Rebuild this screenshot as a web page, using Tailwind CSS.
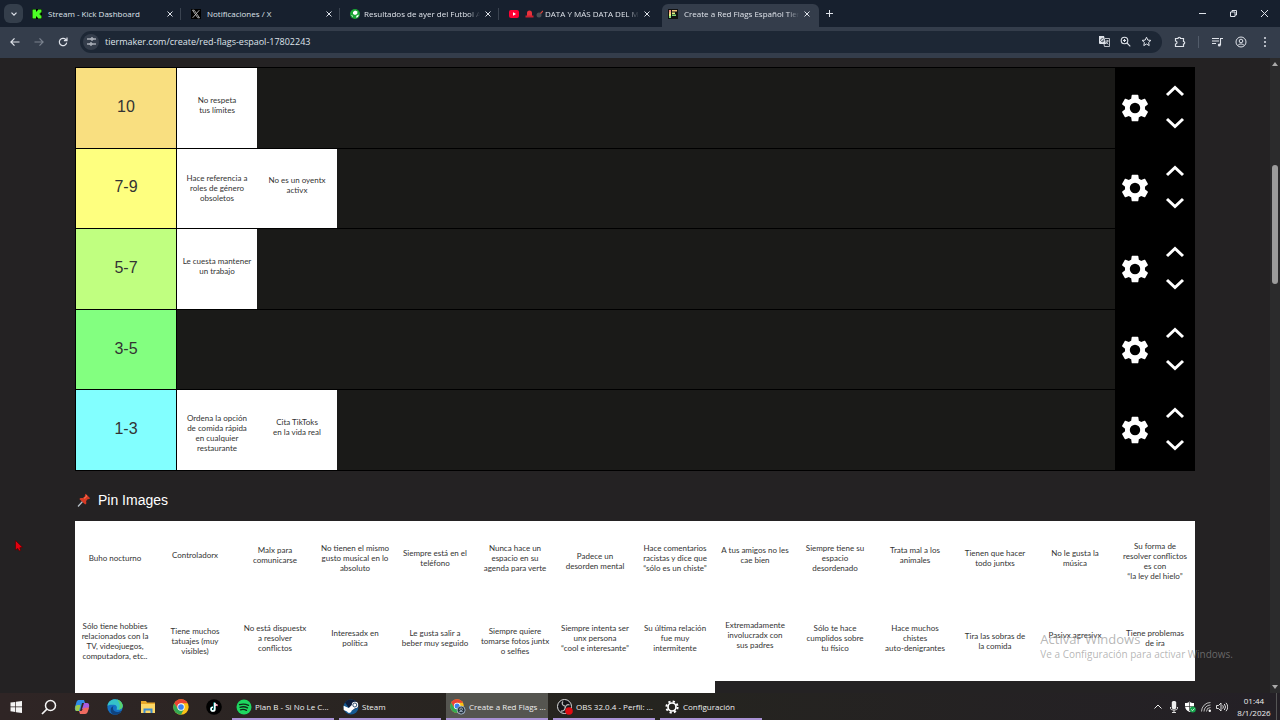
<!DOCTYPE html>
<html lang="es">
<head>
<meta charset="utf-8">
<meta name="viewport" content="width=device-width, initial-scale=1">
<title>Create a Red Flags Español Tier List</title>
<script src="https://cdn.jsdelivr.net/npm/@tailwindcss/browser@4"></script>
</head>
<body class="flex h-screen flex-col overflow-hidden bg-[#242223] font-['Open_Sans','Noto_Sans',sans-serif] text-[#dfe3ea]">
<svg class="hidden">
  <symbol id="gear" viewBox="0 0 24 24"><path fill="currentColor" d="M19.43 12.98c.04-.32.07-.64.07-.98s-.03-.66-.07-.98l2.11-1.65c.19-.15.24-.42.12-.64l-2-3.46c-.12-.22-.39-.3-.61-.22l-2.49 1c-.52-.4-1.08-.73-1.69-.98l-.38-2.65A.49.49 0 0 0 14 2h-4c-.25 0-.46.18-.49.42l-.38 2.65c-.61.25-1.17.59-1.69.98l-2.49-1c-.23-.09-.49 0-.61.22l-2 3.46c-.13.22-.07.49.12.64l2.11 1.65c-.04.32-.07.65-.07.98s.03.66.07.98l-2.11 1.65c-.19.15-.24.42-.12.64l2 3.46c.12.22.39.3.61.22l2.49-1c.52.4 1.08.73 1.69.98l.38 2.65c.03.24.24.42.49.42h4c.25 0 .46-.18.49-.42l.38-2.65c.61-.25 1.17-.59 1.69-.98l2.49 1c.23.09.49 0 .61-.22l2-3.46c.12-.22.07-.49-.12-.64l-2.11-1.65zM12 15.9a3.9 3.9 0 1 1 0-7.8 3.9 3.9 0 0 1 0 7.8z"/></symbol>
  <symbol id="up" viewBox="0 0 20 12"><path d="M2 10 10 2.500 18 10" fill="none" stroke="currentColor" stroke-width="3"/></symbol>
  <symbol id="down" viewBox="0 0 20 12"><path d="M2 2 10 9.500 18 2" fill="none" stroke="currentColor" stroke-width="3"/></symbol>
  <symbol id="x" viewBox="0 0 8 8"><path d="M1.500 1.500 6.500 6.500M6.500 1.500 1.500 6.500" fill="none" stroke="currentColor" stroke-width="1"/></symbol>
  <symbol id="chrome" viewBox="0 0 48 48"><circle cx="24" cy="24" r="23" fill="#fbc116"/><path d="M24 13h20a23 23 0 0 0-40-.5L14.500 30z" fill="#ea4335"/><path d="M4 12.500A23 23 0 0 0 24 47l9.500-17.500-19 0z" fill="#34a853"/><circle cx="24" cy="24" r="11" fill="#fff"/><circle cx="24" cy="24" r="8.500" fill="#3b82f0"/></symbol>
</svg>

<!-- Tab strip -->
<header class="flex h-[27px] shrink-0 items-end bg-[#17202e] text-[8px]">
  <button aria-label="Buscar pestañas" class="mb-1 ml-1 flex size-[19px] shrink-0 items-center justify-center rounded-md bg-[#343e4b]"><svg class="size-2" viewBox="0 0 8 8"><path d="M1.500 2.700 4 5.200 6.500 2.700" fill="none" stroke="currentColor" stroke-width="1.200"/></svg></button>
  <nav class="ml-[3px] flex min-w-0">
    <div class="flex h-[23px] w-[159px] items-center gap-1.5 pb-1 pl-1.5 pr-1">
      <svg class="size-2.5 shrink-0" viewBox="0 0 10 10"><path fill="#000" d="M0 0h10v10H0z"/><path fill="#4cff26" d="M.5 .5h3.500v2H5v-1h1v-1h3.500v3h-1v1h-1v1h1v1h1v3H6v-1H5v-1H4v2H.5z"/></svg>
      <a href="#" class="min-w-0 flex-1 whitespace-nowrap">Stream - Kick Dashboard</a>
      <button aria-label="Cerrar"><svg class="size-2"><use href="#x"/></svg></button>
      <span class="h-3 w-px bg-[#3a4350]"></span>
    </div>
    <div class="flex h-[23px] w-[159px] items-center gap-1.5 pb-1 pl-1.5 pr-1">
      <svg class="size-2.5 shrink-0" viewBox="0 0 10 10"><path fill="#000" d="M0 0h10v10H0z"/><path d="M1.500 1.200h1.700l5.300 7.600H6.800zM8.300 1.200 1.700 8.800" fill="none" stroke="#bbb" stroke-width=".9"/></svg>
      <a href="#" class="min-w-0 flex-1 whitespace-nowrap">Notificaciones / X</a>
      <button aria-label="Cerrar"><svg class="size-2"><use href="#x"/></svg></button>
      <span class="h-3 w-px bg-[#3a4350]"></span>
    </div>
    <div class="flex h-[23px] w-[159px] items-center gap-1 pb-1 pl-1.5 pr-1">
      <svg class="size-2.5 shrink-0" viewBox="0 0 10 10"><circle cx="5" cy="5" r="5" fill="#19a534"/><path fill="#fff" d="m3 3 2-1.500 2.500 1-.3 2.500L5 6 3 5zM1 6l1.500.5.500 2zM8 6l1-.5-1 2.500-2 .8.500-2z"/></svg>
      <a href="#" class="min-w-0 flex-1 whitespace-nowrap mask-r-from-90%">Resultados de ayer del Futbol A</a>
      <button aria-label="Cerrar" class="mr-0.5"><svg class="size-2"><use href="#x"/></svg></button>
      <span class="h-3 w-px bg-[#3a4350]"></span>
    </div>
    <div class="flex h-[23px] w-[159px] items-center gap-1 pb-1 pl-1.5 pr-[11px]">
      <svg class="mr-0.5 size-2.5 shrink-0" viewBox="0 0 10 10"><rect y="1" width="10" height="8" rx="2" fill="#f03"/><path fill="#fff" d="m4 3.200 3 1.800-3 1.800z"/></svg>
      <a href="#" class="flex min-w-0 flex-1 items-center gap-0.5 whitespace-nowrap mask-r-from-90%">
        <svg class="h-2 w-[9px] shrink-0" viewBox="0 0 9 8"><path fill="#e8323c" d="M2 6V3a2.500 2.500 0 0 1 5 0v3z"/><path fill="#cc2130" d="M.5 5.500h8V7.500h-8z"/></svg>
        <svg class="h-2 w-[7px] shrink-0" viewBox="1 0 7 8"><circle cx="4" cy="5" r="2.500" fill="#4a4f55"/><path d="M5.500 3.500 8 1" stroke="#d5463c" stroke-width="1.200"/></svg>
        <span>DATA Y MÁS DATA DEL M</span></a>
      <button aria-label="Cerrar"><svg class="size-2"><use href="#x"/></svg></button>
    </div>
    <div class="flex h-[23px] w-[157px] items-center gap-1 rounded-t-md bg-[#343d4b] pb-1 pl-1.5 pr-2">
      <svg class="mr-0.5 size-2.5 shrink-0" viewBox="0 0 10 10"><path fill="#111" d="M0 0h10v10H0z"/><path fill="#f08a80" d="M1 1h2v2H1z"/><path fill="#f2c27c" d="M1 3h2v2H1zM4 1h5v1.500H4z"/><path fill="#eaf07c" d="M1 5h2v2H1zM4 3.500h3V5H4z"/><path fill="#83d978" d="M1 7h2v2H1zM4 5.500h4V7H4z"/></svg>
      <a href="#" class="min-w-0 flex-1 whitespace-nowrap mask-r-from-90%">Create a Red Flags Español Tier</a>
      <button aria-label="Cerrar"><svg class="size-2"><use href="#x"/></svg></button>
    </div>
  </nav>
  <button aria-label="Nueva pestaña" class="mb-[9px] ml-1.5"><svg class="size-[9px]" viewBox="0 0 9 9"><path d="M4.500 1v7M1 4.500h7" stroke="currentColor"/></svg></button>
  <div class="mb-[9px] ml-auto mr-[11px] flex gap-[22px]">
    <button aria-label="Minimizar"><svg class="size-[9px]" viewBox="0 0 9 9"><path d="M1 4.500h7" stroke="currentColor"/></svg></button>
    <button aria-label="Restaurar"><svg class="size-[9px]" viewBox="0 0 9 9"><path d="M1.500 3h4.500v4.500H1.500zM3 3V1.500h4.500V6H6" fill="none" stroke="currentColor"/></svg></button>
    <button aria-label="Cerrar ventana"><svg class="size-[9px]" viewBox="0 0 9 9"><path d="m1 1 7 7M8 1 1 8" stroke="currentColor"/></svg></button>
  </div>
</header>

<!-- Address bar -->
<div class="flex h-[31px] shrink-0 items-center bg-[#343d4b] pb-0.5 pr-[9px]">
  <div class="flex w-20 shrink-0 items-center gap-3 pl-[9px]">
    <button aria-label="Atrás"><svg class="size-3" viewBox="0 0 12 12"><path d="M10.500 6H2M5.500 2.300 1.900 6l3.600 3.700" fill="none" stroke="currentColor" stroke-width="1.200"/></svg></button>
    <button aria-label="Adelante" class="text-[#7a828e]"><svg class="size-3" viewBox="0 0 12 12"><path d="M1.500 6H10M6.500 2.300 10.100 6 6.500 9.700" fill="none" stroke="currentColor" stroke-width="1.200"/></svg></button>
    <button aria-label="Recargar"><svg class="size-3" viewBox="0 0 12 12"><path d="M9.700 6.600A3.700 3.700 0 1 1 8.800 3.500L10 4.700M10 1.600v3.100H6.900" fill="none" stroke="currentColor" stroke-width="1.200"/></svg></button>
  </div>
  <form class="flex h-[22px] min-w-0 flex-1 items-center rounded-full bg-[#1d2735] pl-[3px] pr-2.5">
    <button type="button" aria-label="Información del sitio" class="flex size-4 items-center justify-center rounded-full bg-[#343d4b]"><svg class="size-[9px]" viewBox="0 0 9 9"><path d="M0 2h3.500M5.500 7H9M6.500 2H9M0 7h2.500" stroke="currentColor"/><circle cx="5" cy="2" r="1.200" fill="none" stroke="currentColor"/><circle cx="4" cy="7" r="1.200" fill="none" stroke="currentColor"/></svg></button>
    <input aria-label="Dirección" value="tiermaker.com/create/red-flags-espaol-17802243" class="ml-1.5 min-w-0 flex-1 bg-transparent text-[9px] outline-none">
    <div class="flex items-center gap-2.5">
      <button type="button" aria-label="Traducir"><svg class="size-[11px]" viewBox="0 0 11 11"><path fill="currentColor" d="M0 0h5l2 8H1a1 1 0 0 1-1-1z"/><path d="M6 2.500h4.500v8H5.500L5 8M6.500 5H10M8.300 4v1c0 1.500-1 2.500-1.500 3M7.300 6l2 2.500" fill="none" stroke="currentColor" stroke-width=".8"/><path d="M4.700 3.300A1.600 1.600 0 1 0 4.900 4.600H3.500" fill="none" stroke="#1d2735" stroke-width=".8"/></svg></button>
      <button type="button" aria-label="Zoom"><svg class="size-[11px]" viewBox="0 0 11 11"><circle cx="4.500" cy="4.500" r="3.300" fill="none" stroke="currentColor" stroke-width="1.100"/><path d="m7 7 3.300 3.300M3 4.500h3M4.500 3v3" stroke="currentColor" stroke-width="1.100"/></svg></button>
      <button type="button" aria-label="Favorito"><svg class="size-[11px]" viewBox="0 0 11 11"><path d="m5.500 1.200 1.300 2.900 3.100.3-2.300 2.100.6 3.100-2.700-1.600-2.700 1.600.6-3.100L1.100 4.400l3.100-.3z" fill="none" stroke="currentColor"/></svg></button>
    </div>
  </form>
  <div class="ml-3 flex items-center gap-3">
    <button aria-label="Extensiones"><svg class="size-3" viewBox="0 0 12 12"><path d="M1.500 2.500H4a1.200 1.200 0 0 1 2.500 0h3v3a1.200 1.200 0 0 1 0 2.500v2.500h-8V8a1.500 1.500 0 0 0 0-3z" fill="none" stroke="currentColor" stroke-width="1.200"/></svg></button>
    <span class="h-3 w-px bg-[#525c6a]"></span>
    <button aria-label="Multimedia"><svg class="size-3" viewBox="0 0 12 12"><path d="M1 2.500h7M1 5h7M1 7.500h4M9.500 9V2.500H12" fill="none" stroke="currentColor" stroke-width="1.100"/><circle cx="8.300" cy="9" r="1.500" fill="currentColor"/></svg></button>
    <button aria-label="Perfil"><svg class="size-3" viewBox="0 0 12 12"><circle cx="6" cy="6" r="5" fill="none" stroke="currentColor"/><circle cx="6" cy="5" r="1.800" fill="none" stroke="currentColor"/><path d="M2.700 9.500c1.500-2 5-2 6.600 0" fill="none" stroke="currentColor"/></svg></button>
    <button aria-label="Menú"><svg class="size-3" viewBox="0 0 12 12" fill="currentColor"><circle cx="6" cy="2" r="1"/><circle cx="6" cy="6" r="1"/><circle cx="6" cy="10" r="1"/></svg></button>
  </div>
</div>

<!-- Page -->
<div class="relative flex min-h-0 flex-1">
  <main class="min-w-0 flex-1 overflow-hidden px-[75px] pt-[9px]">
    <section class="flex h-[404px] flex-col border border-r-0 border-black bg-[#1a1a18] text-center font-['Lato',sans-serif] text-[8px]/[10px] text-[#333]">
      <div class="flex flex-1 border-b border-black">
        <h2 class="flex w-[101px] items-center justify-center border-r border-black bg-[#f9df80] pb-0.5 font-['Liberation_Sans',sans-serif] text-base">10</h2>
        <div class="flex flex-1"><p class="flex w-20 items-center justify-center bg-white pb-1.5">No respeta<br>tus límites</p></div>
        <div class="flex w-20 bg-black text-white"><button aria-label="Ajustes" class="flex w-10 items-center justify-center"><svg class="size-8"><use href="#gear"/></svg></button><div class="flex w-10 flex-col items-center justify-center gap-5 pb-0.5"><button aria-label="Subir"><svg class="h-3 w-5"><use href="#up"/></svg></button><button aria-label="Bajar"><svg class="h-3 w-5"><use href="#down"/></svg></button></div></div>
      </div>
      <div class="flex flex-1 border-b border-black">
        <h2 class="flex w-[101px] items-center justify-center border-r border-black bg-[#feff7f] pb-0.5 font-['Liberation_Sans',sans-serif] text-base">7-9</h2>
        <div class="flex flex-1"><p class="flex w-20 items-center justify-center bg-white">Hace referencia a<br>roles de género<br>obsoletos</p><p class="flex w-20 items-center justify-center bg-white pb-1.5">No es un oyentx<br>activx</p></div>
        <div class="flex w-20 bg-black text-white"><button aria-label="Ajustes" class="flex w-10 items-center justify-center"><svg class="size-8"><use href="#gear"/></svg></button><div class="flex w-10 flex-col items-center justify-center gap-5 pb-0.5"><button aria-label="Subir"><svg class="h-3 w-5"><use href="#up"/></svg></button><button aria-label="Bajar"><svg class="h-3 w-5"><use href="#down"/></svg></button></div></div>
      </div>
      <div class="flex flex-1 border-b border-black">
        <h2 class="flex w-[101px] items-center justify-center border-r border-black bg-[#c0ff80] pb-0.5 font-['Liberation_Sans',sans-serif] text-base">5-7</h2>
        <div class="flex flex-1"><p class="flex w-20 items-center justify-center bg-white pb-1.5">Le cuesta mantener<br>un trabajo</p></div>
        <div class="flex w-20 bg-black text-white"><button aria-label="Ajustes" class="flex w-10 items-center justify-center"><svg class="size-8"><use href="#gear"/></svg></button><div class="flex w-10 flex-col items-center justify-center gap-5 pb-0.5"><button aria-label="Subir"><svg class="h-3 w-5"><use href="#up"/></svg></button><button aria-label="Bajar"><svg class="h-3 w-5"><use href="#down"/></svg></button></div></div>
      </div>
      <div class="flex flex-1 border-b border-black">
        <h2 class="flex w-[101px] items-center justify-center border-r border-black bg-[#83ff80] pb-0.5 font-['Liberation_Sans',sans-serif] text-base">3-5</h2>
        <div class="flex flex-1"></div>
        <div class="flex w-20 bg-black text-white"><button aria-label="Ajustes" class="flex w-10 items-center justify-center"><svg class="size-8"><use href="#gear"/></svg></button><div class="flex w-10 flex-col items-center justify-center gap-5 pb-0.5"><button aria-label="Subir"><svg class="h-3 w-5"><use href="#up"/></svg></button><button aria-label="Bajar"><svg class="h-3 w-5"><use href="#down"/></svg></button></div></div>
      </div>
      <div class="flex flex-1">
        <h2 class="flex w-[101px] items-center justify-center border-r border-black bg-[#82ffff] pb-0.5 font-['Liberation_Sans',sans-serif] text-base">1-3</h2>
        <div class="flex flex-1"><p class="flex w-20 items-center justify-center bg-white pt-1.5">Ordena la opción<br>de comida rápida<br>en cualquier<br>restaurante</p><p class="flex w-20 items-center justify-center bg-white pb-1.5">Cita TikToks<br>en la vida real</p></div>
        <div class="flex w-20 bg-black text-white"><button aria-label="Ajustes" class="flex w-10 items-center justify-center"><svg class="size-8"><use href="#gear"/></svg></button><div class="flex w-10 flex-col items-center justify-center gap-5 pb-0.5"><button aria-label="Subir"><svg class="h-3 w-5"><use href="#up"/></svg></button><button aria-label="Bajar"><svg class="h-3 w-5"><use href="#down"/></svg></button></div></div>
      </div>
    </section>

    <h3 class="mb-[11px] mt-[19px] flex h-5 items-center gap-[7px] pl-0.5 font-['Liberation_Sans',sans-serif] text-sm text-white">
      <svg class="size-3.5" viewBox="0 0 14 14"><path d="M1 13.500 6 8" stroke="#b9c2ca" stroke-width="1.200"/><path fill="#d63a24" d="m8.500.8 4.700 4.400-1.500 1.100-.8-.2-1.800 2 .3 2.300-1.200 1.200L2.300 6.100l1.200-1.200 2.400.2L8 3.200l-.2-1z"/><path fill="#f36a4b" d="m9 1.500 1.500 1.400-2.800 3-1-.9L9 3z"/></svg>
      Pin Images</h3>

    <section class="grid grid-cols-14 auto-rows-[80px] text-center font-['Lato',sans-serif] text-[8px]/[10px] text-[#333] *:flex *:items-center *:justify-center *:bg-white *:whitespace-nowrap">
      <p class="pb-1.5">Buho nocturno</p>
      <p class="pb-3">Controladorx</p>
      <p class="pb-3">Malx para<br>comunicarse</p>
      <p class="pb-1.5">No tienen el mismo<br>gusto musical en lo<br>absoluto</p>
      <p class="pb-1.5">Siempre está en el<br>teléfono</p>
      <p class="pb-1.5">Nunca hace un<br>espacio en su<br>agenda para verte</p>
      <p>Padece un<br>desorden mental</p>
      <p class="pb-1.5">Hace comentarios<br>racistas y dice que<br>“sólo es un chiste”</p>
      <p class="pb-3">A tus amigos no les<br>cae bien</p>
      <p class="pb-1.5">Siempre tiene su<br>espacio<br>desordenado</p>
      <p class="pb-3">Trata mal a los<br>animales</p>
      <p class="pb-1.5">Tienen que hacer<br>todo juntxs</p>
      <p class="pb-1.5">No le gusta la<br>música</p>
      <p>Su forma de<br>resolver conflictos<br>es con<br>“la ley del hielo”</p>
      <p>Sólo tiene hobbies<br>relacionados con la<br>TV, videojuegos,<br>computadora, etc..</p>
      <p>Tiene muchos<br>tatuajes (muy<br>visibles)</p>
      <p class="pb-1.5">No está dispuestx<br>a resolver<br>conflictos</p>
      <p class="pb-1.5">Interesadx en<br>política</p>
      <p class="pb-1.5">Le gusta salir a<br>beber muy seguido</p>
      <p>Siempre quiere<br>tomarse fotos juntx<br>o selfies</p>
      <p class="pb-1.5">Siempre intenta ser<br>unx persona<br>“cool e interesante”</p>
      <p class="pb-1.5">Su última relación<br>fue muy<br>intermitente</p>
      <p class="pb-3">Extremadamente<br>involucradx con<br>sus padres</p>
      <p class="pb-1.5">Sólo te hace<br>cumplidos sobre<br>tu físico</p>
      <p class="pb-1.5">Hace muchos<br>chistes<br>auto-denigrantes</p>
      <p>Tira las sobras de<br>la comida</p>
      <p class="pb-3">Pasivx agresivx</p>
      <p class="pb-1.5">Tiene problemas<br>de ira</p>
      <div class="col-span-8"></div>
    </section>
  </main>

  <div class="flex w-2.5 shrink-0 flex-col items-center justify-between bg-[#2b2b2c] py-1">
    <svg class="h-1 w-1.5" viewBox="0 0 6 4"><path fill="#aaa" d="m3 0 3 4H0z"/></svg>
    <div class="flex w-1.5 flex-1 flex-col pt-[99px]"><div class="h-[119px] rounded-full bg-[#9c9c9c]"></div></div>
    <svg class="h-1 w-1.5" viewBox="0 0 6 4"><path fill="#aaa" d="m3 4 3-4H0z"/></svg>
  </div>

  <!-- Mouse pointer -->
  <svg class="absolute left-[15px] top-[482px] h-3 w-2" viewBox="0 0 8 12"><path fill="#e3000f" stroke="#500" stroke-width=".7" d="M.5.500v9.500l2.200-1.600L4.200 11l1.600-.8-1-2.400 2.700-.5z"/></svg>

  <!-- System activation notice -->
  <div class="pointer-events-none absolute bottom-8 right-[47px] text-[#8e8e8e]/65">
    <p class="text-[13px]/[16px]">Activar Windows</p>
    <p class="text-[10px]/[14px]">Ve a Configuración para activar Windows.</p>
  </div>
</div>

<!-- Taskbar -->
<footer class="flex h-[27px] shrink-0 items-center bg-linear-to-r from-[#2f2525] via-[#25241f] to-[#242026] text-[8px] text-[#eee]">
  <div class="flex h-full items-center gap-[17px] pl-2">
    <button aria-label="Inicio"><svg class="size-4" viewBox="0 0 16 16"><path fill="#f5f5f5" d="m2.500 3.600 4.800-.7v4.700H2.500zM8 2.800l6-.8v5.600H8zM2.500 8.300h4.800V13l-4.800-.7zM8 8.300h6V14l-6-.8z"/></svg></button>
    <button aria-label="Buscar"><svg class="size-4" viewBox="0 0 16 16"><circle cx="9.500" cy="6.500" r="5" fill="none" stroke="#f5f5f5" stroke-width="1.500"/><path d="M6 10 1 15" stroke="#f5f5f5" stroke-width="1.700"/></svg></button>
    <button aria-label="Copilot"><svg class="size-4" viewBox="0 0 16 16"><path fill="#2d8be8" d="M5 1h5l1 3H8L6 12H3c-2 0-2.500-2-2-4l1.500-5C3 1.500 4 1 5 1z"/><path fill="#9bc94e" d="m1.500 7 2-1h3L5 12H3c-2 0-2-2-1.500-5z"/><path fill="#a65be0" d="M10 4h3c2 0 2.500 2 2 4l-1 3h-4L8 10z"/><path fill="#ef6a60" d="m9.500 9 5.500-.5-1 3.500c-.5 2-1.500 3-3 3H6l-1-3h2.500z"/></svg></button>
    <button aria-label="Edge"><svg class="size-4" viewBox="0 0 16 16"><circle cx="8" cy="8" r="7.700" fill="#1671c5"/><path fill="#35c2c9" d="M.5 7C1 2.500 4.500.300 8 .300c4.500 0 8 3.500 7.700 7C15.500 10 12 11.500 9.500 10.500c1-1.500.5-4.500-2.500-4.700C4 5.500 1.500 6 .5 7z"/><path fill="#59d26e" d="M10 .600c3.500.9 6 4 5.700 6.700-.2 2-2 3.200-4 3.500 2-3 1-7.200-1.700-10.200z"/><path fill="#10437f" d="M6.500 7C5 9.500 6.500 13 10 13c2 0 3.500-.6 4.500-1.500-2 5-8 5.300-10 2.500-2-3-.5-6 2-7z"/></svg></button>
    <button aria-label="Explorador"><svg class="size-4" viewBox="0 0 16 16"><path fill="#e8a92b" d="M1 2h5l1 1.500h8V14H1z"/><path fill="#fcd766" d="M1 5h14v9H1z"/><path fill="#3d8cd0" d="M3.500 9.500h9V14h-2v-2.500h-5V14h-2z"/></svg></button>
    <button aria-label="Chrome"><svg class="size-4"><use href="#chrome"/></svg></button>
    <button aria-label="TikTok"><svg class="size-4" viewBox="0 0 16 16"><circle cx="8" cy="8" r="7.800" fill="#000"/><path d="M8.300 3.500V10A1.700 1.700 0 1 1 6.600 8.300" fill="none" stroke="#25f4ee" stroke-width="1.500"/><path d="M8.900 3.800v6.400a1.900 1.900 0 1 1-1.900-1.900M8.900 3.800c.2 1.500 1.300 2.400 2.700 2.500" fill="none" stroke="#fff" stroke-width="1.500"/><path d="M9.600 4.500c.4 1.500 1 2.300 2.400 2.400" fill="none" stroke="#fe2c55" stroke-width=".6"/></svg></button>
  </div>
  <div class="ml-2.5 flex h-full items-stretch gap-[5px] *:flex *:w-[102px] *:items-center *:gap-[3px] *:border-b-2 *:border-[#a992d5] *:pl-1 *:pt-0.5 *:whitespace-nowrap">
    <button><svg class="size-4" viewBox="0 0 16 16"><circle cx="8" cy="8" r="7.500" fill="#1ed760"/><path d="M3.500 5.700c3-1 6.500-.7 9 .7M4 8.300c2.500-.8 5.500-.5 7.500.6M4.500 10.800c2-.6 4.300-.4 6 .6" fill="none" stroke="#102a18" stroke-width="1.300" stroke-linecap="round"/></svg><span>Plan B - Si No Le C...</span></button>
    <button><svg class="size-4" viewBox="0 0 16 16"><circle cx="8" cy="8" r="7.500" fill="#155a93"/><path fill="#0c1c3c" d="M2 3.500A7.500 7.500 0 0 1 15.500 8L8 12z"/><path fill="#fff" d="m.6 6.800 5.200 2.200 3-3A3.200 3.200 0 1 1 12 9.200l-3.400 2.500A2.400 2.400 0 0 1 4 12.400l-3.300-1.400z"/><circle cx="11.800" cy="6" r="2" fill="#fff" stroke="#17385f" stroke-width=".9"/></svg><span>Steam</span></button>
    <button class="bg-[#555550]"><svg class="size-4 shrink-0" viewBox="0 0 18 18"><use href="#chrome" width="16" height="16"/><circle cx="12.500" cy="12.500" r="4.500" fill="#25303c" stroke="#a8bbd0"/><circle cx="12.500" cy="11.500" r="1.500" fill="none" stroke="#a8bbd0"/><path d="M10 15c1-1.500 4-1.500 5 0" stroke="#a8bbd0" fill="none"/></svg><span>Create a Red Flags ...</span></button>
    <button><svg class="size-4 shrink-0" viewBox="0 0 16 16"><circle cx="7.500" cy="7.500" r="7" fill="#161518" stroke="#ddd"/><path d="M6 2.500c-2 2 0 4.500 2 4.500M12.500 6c-2.500-1-4.500 1-4 3M4 12c2.500.500 4.500-1.500 4-4" fill="none" stroke="#bbb" stroke-width="1.300"/><circle cx="12" cy="12" r="3.800" fill="#e00b12"/></svg><span>OBS 32.0.4 - Perfil: ...</span></button>
    <button><svg class="size-4" viewBox="0 0 16 16"><circle cx="8" cy="8" r="4" fill="none" stroke="#fff" stroke-width="1.700"/><circle cx="8" cy="8" r="5.600" fill="none" stroke="#fff" stroke-width="2" stroke-dasharray="2.200 2.198"/></svg><span>Configuración</span></button>
  </div>
  <div class="ml-auto flex h-full items-center gap-1 pr-[3px]">
    <button aria-label="Iconos ocultos"><svg class="size-3" viewBox="0 0 12 12"><path d="M2.500 7.500 6 4l3.500 3.500" fill="none" stroke="currentColor"/></svg></button>
    <button aria-label="Micrófono"><svg class="size-3" viewBox="0 0 12 12"><rect x="3.800" y="0" width="4.400" height="8" rx="1.500" fill="currentColor"/><path d="M2.500 6v1.500c0 2 7 2 7 0V6M6 9v2.500M4 11.500h4" fill="none" stroke="currentColor" stroke-width=".9"/></svg></button>
    <button aria-label="Seguridad"><svg class="size-3" viewBox="0 0 12 12"><path fill="#fff" d="M1 2c2 0 3.500-.5 4.500-1.500C6.500 1.500 8 2 10 2v3c0 3-2 5-4.500 6C3 10 1 8 1 5z"/><path d="M5.500 1v9M1 5.500h9" stroke="#333" stroke-width=".7"/><circle cx="8.800" cy="8.500" r="3" fill="#14a44b"/><path d="m7.300 8.500 1.200 1.200 2-2.200" fill="none" stroke="#fff" stroke-width=".8"/></svg></button>
    <button aria-label="Red"><svg class="size-3" viewBox="0 0 12 12"><path d="M1.500 10.500A9 9 0 0 1 10.500 1.500M4 10.500A6.500 6.500 0 0 1 10.500 4M6.500 10.500a4 4 0 0 1 4-4" fill="none" stroke="#bbb"/><circle cx="9.800" cy="9.800" r="1.200" fill="#fff"/></svg></button>
    <button aria-label="Volumen"><svg class="size-3" viewBox="0 0 12 12"><path d="M.5 4.500h2L5 2v8L2.500 7.500h-2zM6.700 4.300q1.400 1.700 0 3.400M8.300 3q2.500 3 0 6M10 1.800q3.500 4.200 0 8.400" fill="none" stroke="currentColor" stroke-width=".9"/></svg></button>
    <time class="ml-1 w-9 text-center text-[8px]/[12px]">01:44<br>8/1/2026</time>
    <span class="h-full w-px bg-[#555]"></span>
  </div>
</footer>
</body>
</html>
